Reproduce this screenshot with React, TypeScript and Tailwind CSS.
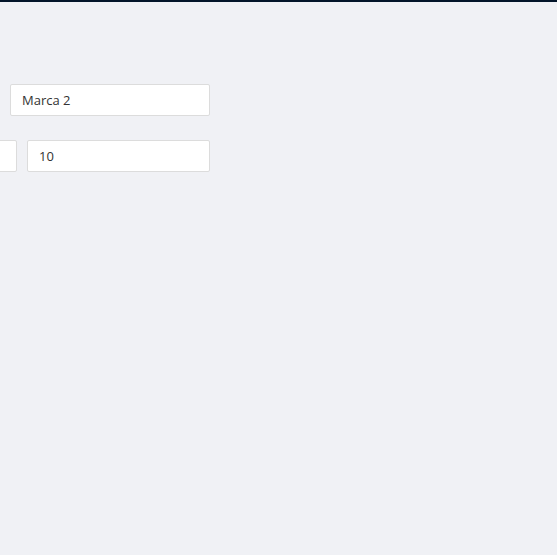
import React from "react";

export default function App() {
  return (
    <div className="min-h-[555px] w-full bg-[#f0f1f5] overflow-hidden" style={{ fontFamily: '"Open Sans", "Noto Sans", sans-serif' }}>
      <div className="h-[2px] bg-[#03152a]" />
      <div className="pt-[82px] flex flex-col gap-[24px]">
        <div className="pl-[10px]">
          <input
            defaultValue="Marca 2"
            className="w-[200px] h-[32px] bg-white border border-[#dcdcdc] rounded-[2px] px-[11px] text-[13px] text-[#333] outline-none"
          />
        </div>
        <div className="flex gap-[10px] ml-[-100px]">
          <input
            defaultValue=""
            className="w-[117px] h-[32px] bg-white border border-[#dcdcdc] rounded-[2px] px-[11px] text-[13px] text-[#333] outline-none"
          />
          <input
            defaultValue="10"
            className="w-[183px] h-[32px] bg-white border border-[#dcdcdc] rounded-[2px] px-[11px] text-[13px] text-[#333] outline-none"
          />
        </div>
      </div>
    </div>
  );
}
